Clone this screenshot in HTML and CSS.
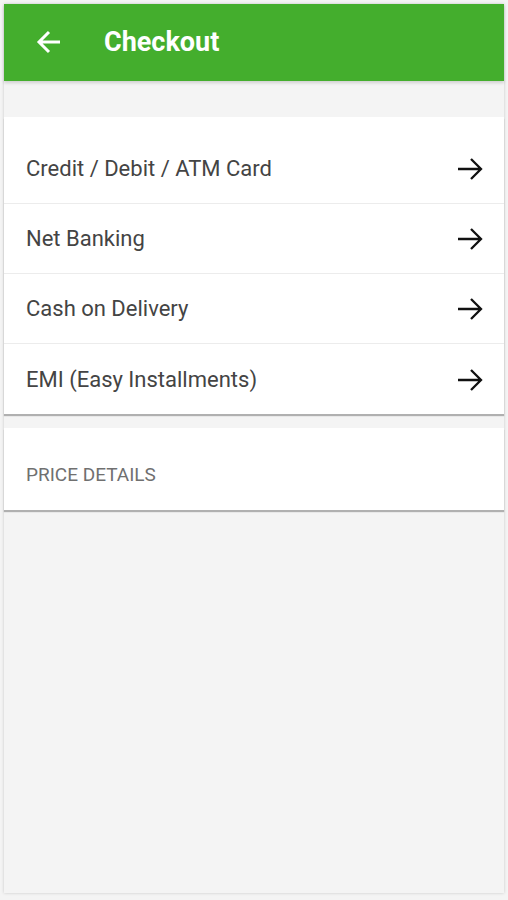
FILE: index.html
```html
<!DOCTYPE html>
<html lang="en">
<head>
<meta charset="UTF-8" />
<title>Checkout</title>
<link rel="stylesheet" href="styles.css">
</head>
<body>

<div class="screen">
  <header class="toolbar">
    <svg class="back" width="26" height="26" viewBox="0 0 26 26">
      <path d="M24 13H3M13 3L3 13l10 10" fill="none" stroke="#fff" stroke-width="3" />
    </svg>
    <h1 class="title">Checkout</h1>
  </header>

  <div class="card options">
    <div class="row">
      <span>Credit / Debit / ATM Card</span>
      <svg class="go" width="28" height="28" viewBox="0 0 28 28"><path d="M2 14h23M15 4l10 10-10 10" fill="none" stroke="#111" stroke-width="2.3" /></svg>
    </div>
    <div class="row">
      <span>Net Banking</span>
      <svg class="go" width="28" height="28" viewBox="0 0 28 28"><path d="M2 14h23M15 4l10 10-10 10" fill="none" stroke="#111" stroke-width="2.3" /></svg>
    </div>
    <div class="row">
      <span>Cash on Delivery</span>
      <svg class="go" width="28" height="28" viewBox="0 0 28 28"><path d="M2 14h23M15 4l10 10-10 10" fill="none" stroke="#111" stroke-width="2.3" /></svg>
    </div>
    <div class="row">
      <span>EMI (Easy Installments)</span>
      <svg class="go" width="28" height="28" viewBox="0 0 28 28"><path d="M2 14h23M15 4l10 10-10 10" fill="none" stroke="#111" stroke-width="2.3" /></svg>
    </div>
  </div>

  <div class="card price">
    <span>PRICE DETAILS</span>
  </div>
</div>

</body>
</html>
```

FILE: styles.css
```css
body {
  margin: 0;
  padding: 4px 4px 6px 4px;
  background: #f4f4f4;
  font-family: Roboto, "Noto Sans", sans-serif;
}

.screen {
  height: 889px;
  background: #f4f4f4;
  box-shadow: 0 0 3px rgba(0,0,0,0.18);
  box-sizing: border-box;
}

/* 顶部绿色栏 */
.toolbar {
  height: 77px;
  background: #44ae2d;
  display: flex;
  align-items: center;
  padding-left: 32px;
  box-shadow: 0 2px 3px rgba(0,0,0,0.15);
}
.back {
  margin-top: -2px;
}
.title {
  margin: 0 0 0 42px;
  color: #fff;
  font-size: 27px;
  font-weight: bold;
  margin-top: -2px;
}

.card {
  background: #fff;
  box-shadow: 0 2px 1px rgba(0,0,0,0.28);
}

.options {
  margin-top: 36px;
  padding-top: 17px;
}
.row {
  height: 70px;
  display: flex;
  align-items: center;
  justify-content: space-between;
  padding: 0 20px 0 22px;
  border-bottom: 1px solid #ececec;
  box-sizing: border-box;
  font-size: 22px;
  color: #444;
}
.row:last-child {
  border-bottom: none;
}
.go {
  margin-top: 1px;
}

.price {
  margin-top: 14px;
  height: 82px;
  display: flex;
  align-items: flex-end;
  padding: 0 0 24px 22px;
  box-sizing: border-box;
  font-size: 19px;
  color: #707070;
}
```
